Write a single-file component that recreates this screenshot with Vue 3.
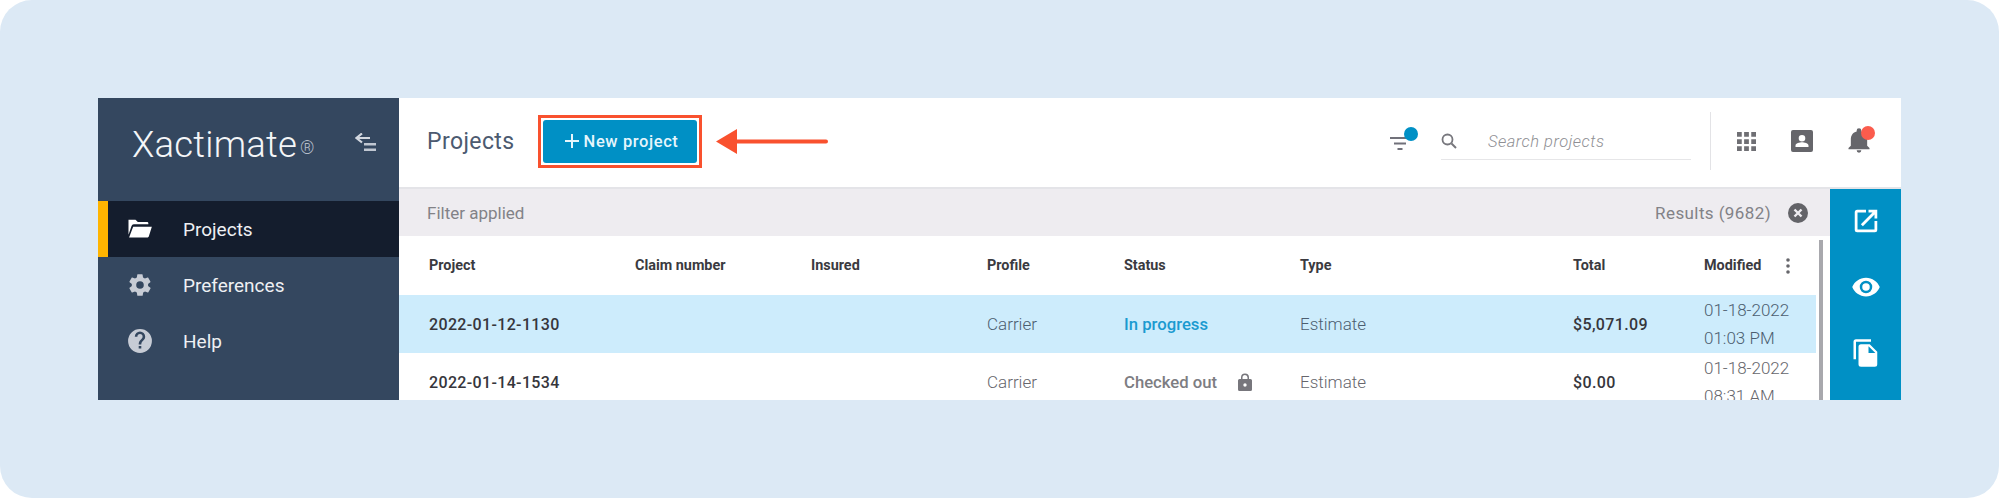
<template>
  <div class="page">
    <div class="app">
      <!-- left nav -->
      <aside class="sidebar">
        <div class="brand">
          <span class="logo">Xactimate<span class="reg">®</span></span>
          <svg class="collapse" viewBox="0 0 22 20" width="22" height="20">
            <path d="M7 .5 1.500 5 7 9.500M2 5h13" fill="none" stroke="#d3d8e0" stroke-width="2.200" />
            <path d="M9 10h12v2.400H9zM9 15.500h12v2.400H9z" fill="#c0c7d2" />
          </svg>
        </div>
        <nav class="nav">
          <div v-for="item in navItems" :key="item.label" class="nav-item" :class="{ active: item.active }">
            <svg class="nav-icon" viewBox="0 0 24 24" v-html="item.icon"></svg>
            <span>{{ item.label }}</span>
          </div>
        </nav>
      </aside>

      <main class="main">
        <!-- top bar -->
        <header class="topbar">
          <h1 class="title">Projects</h1>
          <div class="btn-frame">
            <button class="new-btn"><span class="plus"></span>New project</button>
          </div>
          <svg class="arrow" viewBox="0 0 112 25" width="112" height="25">
            <path d="M0 12.500 21 0v10.500h89a2 2 0 0 1 0 4H21V25z" fill="#f9512e" />
          </svg>

          <div class="top-right">
            <div class="filter-icon">
              <svg viewBox="0 0 20 16" width="20" height="16">
                <path d="M0 2h20v2H0zM4 7.500h12v2H4zM7.500 13h5v2h-5z" fill="#71717a" />
              </svg>
              <span class="filter-dot"></span>
            </div>
            <div class="search">
              <svg viewBox="0 0 16 16" width="16" height="16">
                <circle cx="6.500" cy="6.500" r="5" fill="none" stroke="#77777d" stroke-width="1.800" />
                <path d="m10.500 10.500 4.500 4.500" stroke="#77777d" stroke-width="2" />
              </svg>
              <span class="search-text">Search projects</span>
            </div>
            <div class="top-icons">
              <svg viewBox="0 0 20 20" width="19" height="19">
                <path d="M0 0h5v5H0zM7.500 0h5v5h-5zM15 0h5v5h-5zM0 7.500h5v5H0zM7.500 7.500h5v5h-5zM15 7.500h5v5h-5zM0 15h5v5H0zM7.500 15h5v5h-5zM15 15h5v5h-5z" fill="#6f6f74" />
              </svg>
              <svg viewBox="0 0 22 22" width="22" height="22">
                <path fill-rule="evenodd" d="M2 0h18a2 2 0 0 1 2 2v18a2 2 0 0 1-2 2H2a2 2 0 0 1-2-2V2a2 2 0 0 1 2-2zm9 5a3.300 3.300 0 1 0 0 6.600A3.300 3.300 0 0 0 11 5zM4.500 17h13v-1.500c0-2.300-4.300-3.300-6.500-3.300s-6.500 1-6.500 3.300z" fill="#66666b" />
              </svg>
              <div class="bell">
                <svg viewBox="0 0 24 24" width="28" height="28">
                  <path d="M12 22a2 2 0 0 0 2-2h-4a2 2 0 0 0 2 2zm7-6v-5.500c0-3.300-1.800-5.900-5-6.700V3a2 2 0 0 0-4 0v.8c-3.200.8-5 3.400-5 6.700V16l-2 2v1h18v-1z" fill="#66666b" />
                </svg>
                <span class="bell-dot"></span>
              </div>
            </div>
          </div>
        </header>

        <div class="content">
          <div class="list">
            <div class="filter-bar">
              <span>Filter applied</span>
              <div class="results">
                <span class="results-text">Results (9682)</span>
                <svg viewBox="0 0 20 20" width="20" height="20">
                  <circle cx="10" cy="10" r="10" fill="#636368" />
                  <path d="m6.500 6.500 7 7m0-7-7 7" stroke="#eeecf0" stroke-width="2.400" />
                </svg>
              </div>
            </div>

            <div class="table-wrap">
              <div class="row head">
                <span v-for="c in columns" :key="c">{{ c }}</span>
                <svg class="more" viewBox="0 0 4 16" width="4" height="16">
                  <circle cx="2" cy="2" r="1.800" /><circle cx="2" cy="8" r="1.800" /><circle cx="2" cy="14" r="1.800" />
                </svg>
              </div>
              <div v-for="r in rows" :key="r.project" class="row body" :class="{ selected: r.selected }">
                <span class="strong">{{ r.project }}</span>
                <span></span>
                <span></span>
                <span>{{ r.profile }}</span>
                <span class="status" :class="{ progress: r.selected }">
                  {{ r.status }}
                  <svg v-if="!r.selected" class="lock" viewBox="0 0 14 18" width="14" height="18">
                    <path fill-rule="evenodd" d="M3 6V4.500a4 4 0 0 1 8 0V6h1.500A1.500 1.500 0 0 1 14 7.500v9a1.500 1.500 0 0 1-1.500 1.500h-11A1.500 1.500 0 0 1 0 16.500v-9A1.500 1.500 0 0 1 1.500 6zm1.500 0h5V4.500a2.500 2.500 0 0 0-5 0zM7 10.300a1.700 1.700 0 1 0 0 3.400 1.700 1.700 0 0 0 0-3.400z" fill="#77767c" />
                  </svg>
                </span>
                <span>{{ r.type }}</span>
                <span class="strong">{{ r.total }}</span>
                <span class="modified">{{ r.date }}<br />{{ r.time }}</span>
              </div>
              <div class="scrollbar"></div>
            </div>
          </div>

          <!-- action rail -->
          <div class="rail">
            <svg viewBox="0 0 24 24" width="30" height="30">
              <path d="M5 3h7v2.200H5.200v13.600h13.600V12H21v7a2 2 0 0 1-2 2H5a2 2 0 0 1-2-2V5a2 2 0 0 1 2-2zm9 0h7v7h-2.200V6.800l-9.300 9.300-1.600-1.600 9.300-9.300H14z" fill="#fff" />
            </svg>
            <svg viewBox="0 0 24 24" width="30" height="30">
              <path fill-rule="evenodd" d="M12 4.500C7 4.500 2.700 7.600 1 12c1.700 4.400 6 7.500 11 7.500s9.300-3.100 11-7.500c-1.700-4.400-6-7.500-11-7.500zM12 17a5 5 0 1 1 0-10 5 5 0 0 1 0 10zm0-8a3 3 0 1 0 0 6 3 3 0 0 0 0-6z" fill="#fff" />
            </svg>
            <svg viewBox="0 0 24 24" width="30" height="30">
              <path d="M16 1H4a2 2 0 0 0-2 2v14h2V3h12zm-1 4 6 6v10a2 2 0 0 1-2 2H8a2 2 0 0 1-2-2V7a2 2 0 0 1 2-2zm-1 7h5.500L14 6.500z" fill="#fff" fill-rule="evenodd" />
            </svg>
          </div>
        </div>
      </main>
    </div>
  </div>
</template>

<script setup>
const navItems = [
  {
    label: 'Projects',
    active: true,
    icon: '<path d="M3 4h6l2 2h8a1 1 0 0 1 1 1v1H7.500a2 2 0 0 0-1.900 1.400L3 17V4.500zM7 10h16l-2.600 8.500a1 1 0 0 1-1 .7H3.500z" fill="#fff" />',
  },
  {
    label: 'Preferences',
    icon: '<path fill-rule="evenodd" d="M19.400 13c.1-.3.100-.7.100-1s0-.7-.1-1l2.100-1.600c.2-.2.200-.4.100-.6l-2-3.500c-.1-.2-.4-.3-.6-.2l-2.500 1a7.300 7.300 0 0 0-1.700-1l-.4-2.600A.5.500 0 0 0 14 2h-4a.5.500 0 0 0-.5.400l-.4 2.700c-.6.200-1.200.6-1.700 1l-2.500-1c-.2-.1-.5 0-.6.200l-2 3.500c-.1.200-.1.400.1.600L4.500 11c0 .3-.1.700-.1 1s0 .7.100 1l-2.100 1.600c-.2.200-.2.400-.1.600l2 3.500c.1.200.4.300.6.200l2.500-1c.5.400 1.100.8 1.700 1l.4 2.700c0 .2.200.4.500.4h4c.2 0 .5-.2.500-.4l.4-2.700c.6-.2 1.200-.6 1.700-1l2.500 1c.2.100.5 0 .6-.2l2-3.500c.1-.2.100-.4-.1-.6zM12 15.500a3.500 3.500 0 1 1 0-7 3.500 3.500 0 0 1 0 7z" fill="#c7ccd5" />',
  },
  {
    label: 'Help',
    icon: '<path fill-rule="evenodd" d="M12 1a11 11 0 1 0 0 22 11 11 0 0 0 0-22zm1.200 18h-2.400v-2.400h2.400zm2.500-8.200-1.100 1.100c-.9.900-1.400 1.600-1.400 3.300h-2.400v-.6c0-1.300.5-2.500 1.400-3.400l1.500-1.500c.4-.4.700-1 .7-1.700a2.400 2.400 0 0 0-4.800 0H7.200a4.800 4.800 0 0 1 9.600 0c0 1.100-.4 2-1.100 2.800z" fill="#c7ccd5" />',
  },
]

const columns = ['Project', 'Claim number', 'Insured', 'Profile', 'Status', 'Type', 'Total', 'Modified']

const rows = [
  { project: '2022-01-12-1130', profile: 'Carrier', status: 'In progress', type: 'Estimate', total: '$5,071.09', date: '01-18-2022', time: '01:03 PM', selected: true },
  { project: '2022-01-14-1534', profile: 'Carrier', status: 'Checked out', type: 'Estimate', total: '$0.00', date: '01-18-2022', time: '08:31 AM' },
]
</script>

<style>
html, body { margin: 0; background: #fff; }
</style>

<style scoped>
.page {
  width: 1999px;
  height: 498px;
  box-sizing: border-box;
  padding: 98px;
  background: #dce9f5;
  border-radius: 32px;
  font-family: Roboto, "Liberation Sans", sans-serif;
}
.app {
  display: flex;
  height: 302px;
  overflow: hidden;
  background: #fff;
}

/* ===== sidebar ===== */
.sidebar {
  width: 301px;
  flex-shrink: 0;
  background: #34475f;
  color: #f3f4f6;
}
.brand {
  height: 103px;
  box-sizing: border-box;
  padding: 0 22px 10px 34px;
  display: flex;
  align-items: center;
  justify-content: space-between;
}
.logo {
  font-size: 36.5px;
  font-weight: 300;
  letter-spacing: 0.2px;
  color: #f4f6f8;
}
.reg {
  font-size: 18px;
  color: #b5bdc9;
  margin-left: 3px;
  vertical-align: 3px;
}
.collapse { margin-top: -3px; }
.nav-item {
  height: 56px;
  display: flex;
  align-items: center;
  padding-left: 27px;
  gap: 30px;
  font-size: 19px;
  color: #eef0f3;
}
.nav-item.active {
  background: #141d2d;
  border-left: 10px solid #ffb400;
  padding-left: 17px;
}
.nav-icon {
  width: 26px;
  height: 26px;
  margin-left: 2px;
}
.nav-item.active .nav-icon {
  width: 28px;
  height: 28px;
  margin-left: 0;
}

/* ===== top bar ===== */
.main {
  flex: 1;
  min-width: 0;
  display: flex;
  flex-direction: column;
}
.topbar {
  height: 91px;
  flex-shrink: 0;
  box-sizing: border-box;
  display: flex;
  align-items: center;
  padding-left: 28px;
  padding-bottom: 3px;
  border-bottom: 2px solid #e4e4e8;
}
.title {
  margin: 0 23px 0 0;
  font-size: 23px;
  font-weight: 400;
  letter-spacing: 0.4px;
  color: #4c5a70;
}
.btn-frame {
  border: 3px solid #f9512e;
  padding: 2px;
  display: flex;
}
.new-btn {
  width: 154px;
  height: 43px;
  border: none;
  border-radius: 3px;
  background: #0090c5;
  color: #e6f6fc;
  font-family: inherit;
  font-size: 16.5px;
  font-weight: 500;
  letter-spacing: 0.6px;
  display: flex;
  align-items: center;
  justify-content: center;
  gap: 5px;
  padding: 0 0 0 4px;
}
.plus {
  width: 14px;
  height: 14px;
  background:
    linear-gradient(#e6f6fc, #e6f6fc) center / 100% 2px no-repeat,
    linear-gradient(#e6f6fc, #e6f6fc) center / 2px 100% no-repeat;
}
.arrow { margin-left: 14px; }
.top-right {
  margin-left: auto;
  display: flex;
  align-items: center;
}
.filter-icon {
  position: relative;
  width: 30px;
  height: 16px;
  margin-top: 3px;
  margin-right: 21px;
}
.filter-dot {
  position: absolute;
  top: -8px;
  left: 14px;
  width: 14px;
  height: 14px;
  border-radius: 50%;
  background: #0090c5;
}
.search {
  width: 250px;
  height: 36px;
  box-sizing: border-box;
  display: flex;
  align-items: center;
  border-bottom: 1px solid #e6e6e8;
  margin-top: 2px;
  gap: 31px;
  padding-bottom: 2px;
}
.search-text {
  margin-top: 2px;
  font-size: 16.5px;
  font-style: italic;
  font-weight: 300;
  letter-spacing: 0.5px;
  color: #8f8f94;
}
.top-icons {
  display: flex;
  align-items: center;
  height: 58px;
  margin-left: 19px;
  padding-left: 26px;
  padding-right: 28px;
  gap: 35px;
  border-left: 1px solid #e3e3e6;
}
.bell {
  position: relative;
  height: 28px;
  width: 28px;
  margin-left: -3px;
}
.bell-dot {
  position: absolute;
  top: -1px;
  right: -2px;
  width: 14px;
  height: 14px;
  border-radius: 50%;
  background: #fb5c4d;
}

/* ===== list ===== */
.content {
  flex: 1;
  min-height: 0;
  display: flex;
}
.list {
  flex: 1;
  min-width: 0;
}
.filter-bar {
  height: 47px;
  box-sizing: border-box;
  padding: 0 22px 0 28px;
  display: flex;
  align-items: center;
  justify-content: space-between;
  background: #eeecf0;
  font-size: 17px;
  color: #828287;
}
.results {
  display: flex;
  align-items: center;
  gap: 17px;
}
.results-text { letter-spacing: 0.4px; }
.table-wrap { position: relative; }
.row {
  display: grid;
  grid-template-columns: 206px 176px 176px 137px 176px 273px 131px 1fr;
  padding-left: 30px;
  align-items: center;
  margin-right: 14px;
}
.row.head {
  position: relative;
  height: 59px;
  font-size: 14.4px;
  font-weight: 700;
  color: #3a3a40;
}
.more {
  position: absolute;
  left: 1387px;
  top: 22px;
  fill: #66666b;
}
.row.body {
  height: 58px;
  font-size: 17px;
  font-weight: 300;
  color: #66666c;
}
.row.selected {
  background: #cdecfc;
  color: #4c5e70;
}
.strong {
  font-size: 16px;
  font-weight: 500;
  color: #36363c;
  letter-spacing: 0.35px;
}
.status {
  font-weight: 500;
  font-size: 16.7px;
  color: #7d7d82;
  display: flex;
  align-items: center;
  gap: 21px;
}
.status.progress { color: #1a9ad0; }
.modified {
  line-height: 28px;
  font-weight: 300;
}
.scrollbar {
  position: absolute;
  top: 4px;
  right: 7px;
  width: 4px;
  height: 300px;
  background: #a8a8ad;
}

/* ===== action rail ===== */
.rail {
  width: 71px;
  flex-shrink: 0;
  background: #0090c5;
  display: flex;
  flex-direction: column;
  align-items: center;
  gap: 36px;
  padding-top: 17px;
}
</style>
